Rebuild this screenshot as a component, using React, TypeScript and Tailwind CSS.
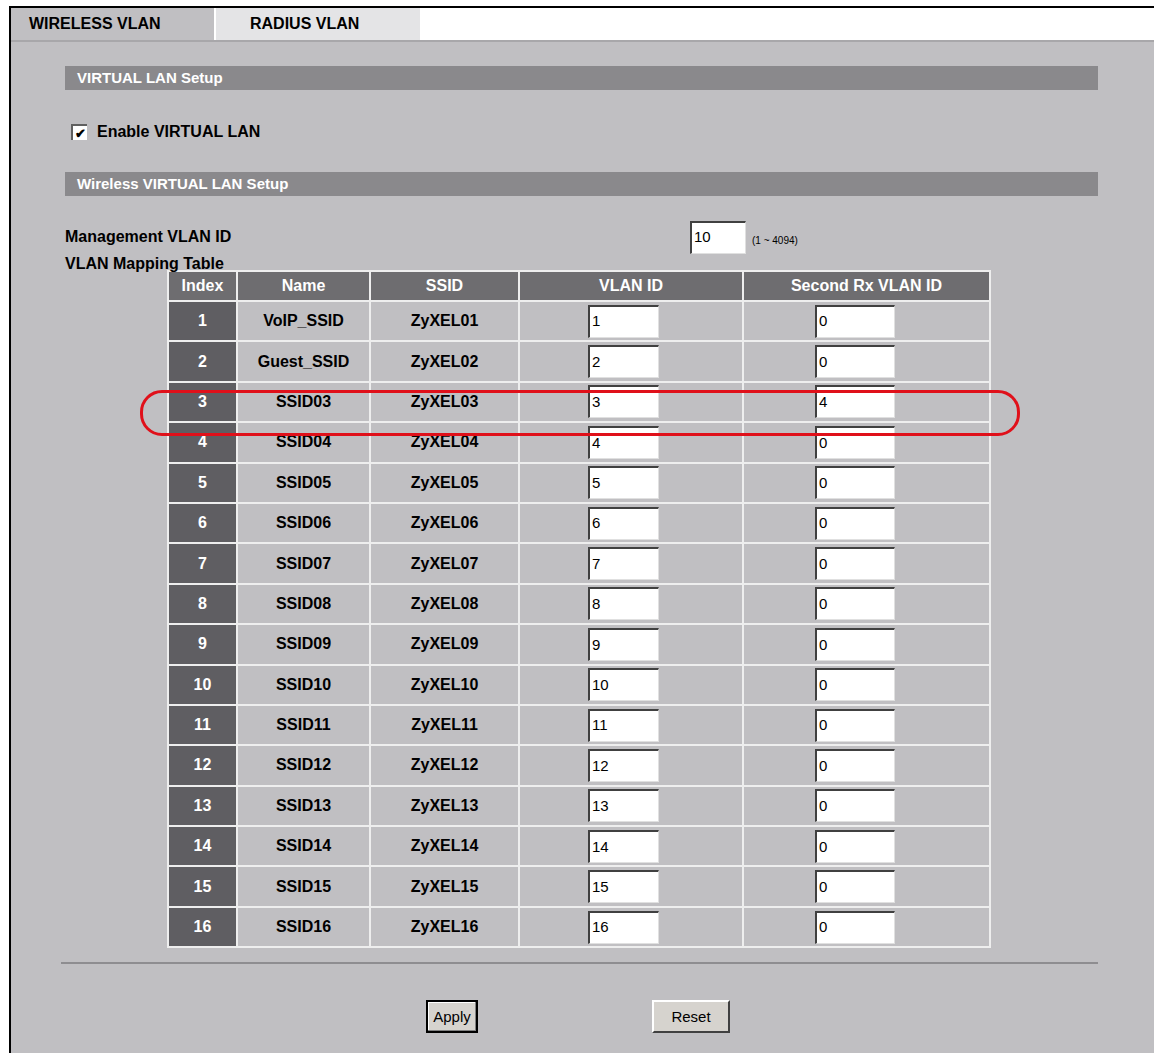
const rows = Array.from({ length: 16 }, (_, i) => {
  const n = i + 1;
  const pad = n < 10 ? `0${n}` : `${n}`;
  return {
    index: n,
    name: n === 1 ? 'VoIP_SSID' : n === 2 ? 'Guest_SSID' : `SSID${pad}`,
    ssid: `ZyXEL${pad}`,
    vlan: `${n}`,
    second: n === 3 ? '4' : '0',
  };
});

const font = { fontFamily: '"Liberation Sans", Arial, sans-serif' };

const Field = ({ value, w }: { value: string; w: string }) => (
  <div className={`${w} h-[33px] bg-white border-t-2 border-l-2 border-t-[#404040] border-l-[#404040] border-b border-r border-b-[#e0e0e0] border-r-[#e0e0e0] flex items-center px-[2px] text-[15px] font-normal text-black`}>
    {value}
  </div>
);

export default function App() {
  return (
    <div className="w-[1154px] h-[1053px] bg-white relative overflow-hidden" style={font}>
      <div className="absolute left-[9px] top-[6px] right-0 bottom-0 border-l-2 border-t-2 border-black flex flex-col">
        <div className="flex h-[32px] text-[16px] font-bold text-black">
          <div className="w-[203px] bg-[#c0bfc2] flex items-center pl-[18px]">WIRELESS VLAN</div>
          <div className="w-[204px] bg-[#e4e4e6] flex items-center pl-[34px] ml-[2px]">RADIUS VLAN</div>
          <div className="flex-1 bg-white" />
        </div>
        <div className="flex-1 bg-[#c0bfc2] border-t-2 border-[#a8a7aa] relative pl-[54px] pr-[56px] pt-[24px]">
          <div className="h-[24px] bg-[#8a898c] text-white font-bold text-[15px] flex items-center pl-[12px]">VIRTUAL LAN Setup</div>
          <div className="flex items-center gap-[10px] mt-[30px] ml-[6px] font-bold text-[16px]">
            <div className="w-[16px] h-[16px] bg-white border-t-2 border-l-2 border-[#606060] flex items-center justify-center text-[13px] leading-none">✔</div>
            Enable VIRTUAL LAN
          </div>
          <div className="h-[24px] bg-[#8a898c] text-white font-bold text-[15px] flex items-center pl-[12px] mt-[28px]">Wireless VIRTUAL LAN Setup</div>
          <div className="flex items-center mt-[28px] h-[26px]">
            <div className="w-[625px] font-bold text-[16px]">Management VLAN ID</div>
            <Field value="10" w="w-[56px]" />
            <span className="ml-[6px] text-[10px] mt-[6px]">(1 ~ 4094)</span>
          </div>
          <div className="font-bold text-[16px] mt-[4px] leading-[20px]">VLAN Mapping Table</div>
          <div className="ml-[102px] w-[824px] mt-[-4px] border-2 border-[#eeeeee] font-bold text-[16px] text-black">
            <div className="grid grid-cols-[67px_133px_149px_224px_1fr] h-[28px] bg-[#6e6d70] text-white">
              {['Index', 'Name', 'SSID', 'VLAN ID', 'Second Rx VLAN ID'].map((h, i) => (
                <div key={h} className={`flex items-center justify-center ${i ? 'border-l-2 border-[#eeeeee]' : ''}`}>{h}</div>
              ))}
            </div>
            {rows.map((r) => (
              <div key={r.index} className="grid grid-cols-[67px_133px_149px_224px_1fr] h-[40.4px] border-t-2 border-[#eeeeee]">
                <div className="bg-[#5f5e62] text-white flex items-center justify-center">{r.index}</div>
                <div className="border-l-2 border-[#eeeeee] flex items-center justify-center">{r.name}</div>
                <div className="border-l-2 border-[#eeeeee] flex items-center justify-center">{r.ssid}</div>
                <div className="border-l-2 border-[#eeeeee] flex items-center pl-[68px]"><Field value={r.vlan} w="w-[71px]" /></div>
                <div className="border-l-2 border-[#eeeeee] flex items-center pl-[71px]"><Field value={r.second} w="w-[80px]" /></div>
              </div>
            ))}
          </div>
          <div className="absolute left-[129px] top-[348px] w-[880px] h-[46px] border-[3px] border-[#e0101a] rounded-[22px] pointer-events-none" />
          <div className="h-[2px] bg-[#8e8d90] mt-[14px] ml-[-4px]" />
          <div className="flex mt-[36px] text-[15px] font-normal">
            <div className="ml-[361px] w-[52px] h-[33px] bg-[#d6d3ce] border-2 border-black flex items-center justify-center shadow-[inset_-1px_-1px_0_#808080,inset_1px_1px_0_#fff]">Apply</div>
            <div className="ml-[174px] w-[78px] h-[33px] bg-[#d6d3ce] border-t-2 border-l-2 border-white border-r-2 border-b-2 border-r-[#404040] border-b-[#404040] flex items-center justify-center">Reset</div>
          </div>
        </div>
      </div>
    </div>
  );
}
